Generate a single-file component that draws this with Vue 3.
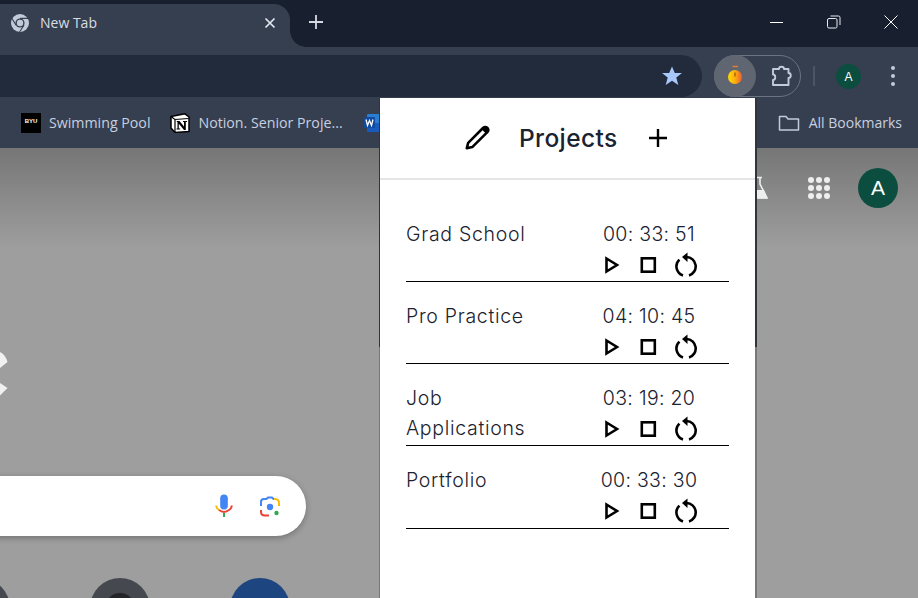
<script setup>
const projects = [
  { name: 'Grad School', time: '00: 33: 51' },
  { name: 'Pro Practice', time: '04: 10: 45' },
  { name: 'Job Applications', time: '03: 19: 20' },
  { name: 'Portfolio', time: '00: 33: 30' },
];
</script>

<template>
  <div class="window">
    <div class="tabstrip">
      <div class="tab">
        <svg class="chrome-icon" width="20" height="20" viewBox="0 0 20 20">
          <circle cx="10" cy="10" r="9" fill="#c3cbdb" />
          <circle cx="10" cy="10" r="4.6" fill="#363f4f" />
          <circle cx="10" cy="10" r="3.2" fill="#c3cbdb" />
          <path d="M10 5.4H18M6 12.3 2 5.5M14 12.3 9.5 19" stroke="#363f4f" stroke-width="1.1" fill="none" />
        </svg>
        <span class="tab-title">New Tab</span>
        <svg class="tab-close" width="12" height="12" viewBox="0 0 12 12">
          <path d="M1.5 1.5 10.5 10.5M10.5 1.5 1.5 10.5" stroke="#e3e7ef" stroke-width="1.7" />
        </svg>
      </div>
      <svg class="new-tab" width="14" height="14" viewBox="0 0 14 14">
        <path d="M7 0V14M0 7H14" stroke="#d5dae4" stroke-width="1.8" />
      </svg>
      <div class="win-controls">
        <svg width="14" height="14" viewBox="0 0 14 14"><path d="M0 7.5H13" stroke="#fff" stroke-width="1" /></svg>
        <svg width="14" height="14" viewBox="0 0 14 14" fill="none" stroke="#e8ebf0" stroke-width="1">
          <rect x="0.5" y="3.5" width="9.5" height="9.5" rx="1.5" />
          <path d="M3.5 1H11.5Q13 1 13 2.5V10" />
        </svg>
        <svg width="14" height="14" viewBox="0 0 14 14"><path d="M0.5 0.5 13.5 13.5M13.5 0.5 0.5 13.5" stroke="#fff" stroke-width="1" /></svg>
      </div>
    </div>

    <div class="toolbar">
      <div class="omnibox">
        <svg width="22" height="22" viewBox="0 0 22 22">
          <path d="M11 1.5 13.8 8H21L15.3 12.6 17.3 20 11 15.8 4.7 20 6.7 12.6 1 8H8.2Z" fill="#a8c7fa" />
        </svg>
      </div>
      <div class="ext-pill">
        <div class="ext-active">
          <svg width="20" height="22" viewBox="0 0 20 22">
            <defs>
              <linearGradient id="timerFill" x1="0" y1="0" x2="1" y2="0">
                <stop offset="0" stop-color="#ffd800" />
                <stop offset="0.5" stop-color="#fdb010" />
                <stop offset="1" stop-color="#ee5a30" />
              </linearGradient>
            </defs>
            <path d="M7.5 1.500H13" stroke="#ef7d22" stroke-width="1.4" />
            <circle cx="10" cy="12" r="7" fill="url(#timerFill)" />
            <path d="M10 7.500V11.500" stroke="#9c4a18" stroke-width="1.200" />
          </svg>
        </div>
        <svg class="puzzle" width="24" height="24" viewBox="0 0 24 24">
          <path d="M3 5H9C9 2 14 2 14 5H18.5V9C21.5 9 21.5 14 18.5 14V21H3V16C6 16 6 10.5 3 10.5Z" fill="none" stroke="#c3cbdb" stroke-width="1.9" stroke-linejoin="round" />
        </svg>
      </div>
      <div class="tool-sep"></div>
      <div class="avatar-small">A</div>
      <div class="kebab"><i></i><i></i><i></i></div>
    </div>

    <div class="bookmarks">
      <div class="bm bm-byu">
        <div class="byu-icon">BYU</div>
        <span>Swimming Pool</span>
      </div>
      <div class="bm bm-notion">
        <svg width="20" height="20" viewBox="0 0 20 20">
          <path d="M1 3.500 15 0.800 19 4V18.500L5 19.500 1 15Z" fill="#fff" stroke="#000" stroke-width="1.500" stroke-linejoin="round" />
          <path d="M1.500 4 5 6.500 18.500 5.500M5 6.500V19" fill="none" stroke="#000" stroke-width="1.200" />
          <path d="M6.800 8H9.500L14 13.500V9H13V8H17V9H15.800V17H14L8.800 10.800V15.500H10.200V16.500H6.500V15.500H7.500V9H6.800Z" fill="#000" />
        </svg>
        <span>Notion. Senior Proje...</span>
      </div>
      <svg class="word-icon" width="16" height="20" viewBox="0 0 16 20">
        <rect x="3" y="1" width="13" height="18" rx="1" fill="#2b7cd3" />
        <rect x="3" y="10" width="13" height="9" fill="#185abd" />
        <rect x="0" y="4" width="11" height="11" rx="1" fill="#124a9e" />
        <path d="M2 6.5 3.5 12.5 5.5 7.5 7.5 12.5 9 6.5" fill="none" stroke="#fff" stroke-width="1.3" />
      </svg>
      <div class="bm bm-all">
        <svg width="22" height="18" viewBox="0 0 22 18">
          <path d="M1.5 2.5H8L10 5H20.5V16H1.5Z" fill="none" stroke="#c3cbdb" stroke-width="1.5" stroke-linejoin="round" />
        </svg>
        <span>All Bookmarks</span>
      </div>
    </div>

    <div class="page">
      <div class="page-top">
        <svg class="flask" width="26" height="26" viewBox="0 0 26 26">
          <path d="M6 2.5H15M8 3V9L1 23H20L13 9V3" fill="none" stroke="#eee" stroke-width="1.6" />
          <path d="M5 15H17L20.5 23.5H1Z" fill="#eee" />
        </svg>
        <div class="apps">
          <i v-for="n in 9" :key="n"></i>
        </div>
        <div class="avatar-big">A</div>
      </div>
      <svg class="logo-part" width="8" height="46" viewBox="0 0 8 46">
        <path d="M0 2C4 4 6.500 8 7.500 12L0 18Z" fill="#f1f1f1" />
        <path d="M0 33 7.500 38 0 45.500Z" fill="#f1f1f1" />
      </svg>
      <div class="search">
        <svg width="18" height="24" viewBox="0 0 18 24">
          <rect x="5.200" y="0.500" width="7.600" height="15" rx="3.800" fill="#4285f4" />
          <path d="M1.200 11.500C1.300 13.500 2.300 15 4 16" fill="none" stroke="#fbbc05" stroke-width="2" />
          <path d="M4 16C7 18.300 11 18.300 14 16 15.700 15 16.700 13.500 16.800 11.500" fill="none" stroke="#ea4335" stroke-width="2" />
          <path d="M9 19V23" stroke="#34a853" stroke-width="2" />
        </svg>
        <svg width="22" height="22" viewBox="0 0 22 22" fill="none" stroke-width="2">
          <path d="M2 11V7Q2 4 5 4H7.500L9 2.500H13L14.500 4H15" stroke="#4285f4" />
          <path d="M15 3.800Q20 4 20 8V11" stroke="#fbbc05" />
          <path d="M2 15V17Q2 20.500 6 20.500H10" stroke="#ea4335" />
          <circle cx="11" cy="12" r="3.200" fill="#4285f4" stroke="none" />
          <circle cx="17.500" cy="18" r="2.200" fill="#34a853" stroke="none" />
        </svg>
      </div>
      <div class="shortcuts">
        <div class="shortcut dark-gray"></div>
        <div class="shortcut dark-gray"><div class="shortcut-inner"></div></div>
        <div class="shortcut blue"></div>
      </div>
    </div>

    <div class="popup">
      <header class="popup-head">
        <svg width="28" height="28" viewBox="0 0 26 26">
          <path d="M3.500 22.500 4.800 17.500 18.800 3.500Q20.800 2 22.800 3.700 24.300 5.600 22.600 7.600L8.600 21.400Z" fill="#fff" stroke="#000" stroke-width="2.400" stroke-linejoin="round" />
          <path d="M17.500 5 21.300 8.800 23 7 23 3.500 19.500 2.500Z" fill="#000" />
        </svg>
        <h1>Projects</h1>
        <svg width="20" height="20" viewBox="0 0 20 20">
          <path d="M10 1V19M1 10H19" stroke="#000" stroke-width="2.400" />
        </svg>
      </header>
      <div class="list">
        <div v-for="p in projects" :key="p.name" class="project">
          <div class="project-name">{{ p.name }}</div>
          <div class="project-side">
            <div class="project-time">{{ p.time }}</div>
            <div class="project-actions">
              <svg width="24" height="24" viewBox="0 0 24 24">
                <path d="M7.500 5.500 18 12 7.500 18.500Z" fill="none" stroke="#000" stroke-width="2.600" />
              </svg>
              <svg width="24" height="24" viewBox="0 0 24 24">
                <rect x="5.800" y="5.300" width="13" height="13.400" fill="none" stroke="#000" stroke-width="2.600" />
              </svg>
              <svg width="24" height="26" viewBox="-1 0 24 26">
                <path d="M12.500 5A9.400 9.400 0 0 1 15 23.400M9 23.400A9.400 9.400 0 0 1 5.400 7.600" fill="none" stroke="#000" stroke-width="2.600" />
                <path d="M13.500 0.500V10L8 5Z" fill="#000" />
              </svg>
            </div>
          </div>
        </div>
      </div>
    </div>
  </div>
</template>

<style scoped>
.window {
  position: relative;
  width: 918px;
  height: 598px;
  overflow: hidden;
  display: flex;
  flex-direction: column;
  background: #9e9e9e;
  font-family: "Open Sans", "Noto Sans", sans-serif;
}

/* tab strip */
.tabstrip {
  height: 47px;
  flex: none;
  display: flex;
  background: #18202f;
}

.tab {
  position: relative;
  width: 290px;
  margin-top: 4px;
  padding: 0 14px 6px 10px;
  box-sizing: border-box;
  display: flex;
  align-items: center;
  gap: 10px;
  background: #363f4f;
  border-radius: 0 16px 0 0;
}

.tab::after {
  content: "";
  position: absolute;
  right: -16px;
  bottom: 0;
  width: 16px;
  height: 16px;
  background: radial-gradient(circle at 100% 0, transparent 15.5px, #363f4f 16px);
}

.tab-title {
  flex: 1;
  font-size: 14px;
  color: #d8dde6;
}

.new-tab {
  margin: 15px 0 0 19px;
}

.win-controls {
  margin-left: auto;
  display: flex;
  gap: 43px;
  padding: 15px 20px 0 0;
}

/* toolbar */
.toolbar {
  height: 50px;
  flex: none;
  display: flex;
  align-items: flex-end;
  background: #363f4f;
}

.omnibox {
  width: 702px;
  height: 42px;
  flex: none;
  padding-right: 19px;
  box-sizing: border-box;
  display: flex;
  align-items: center;
  justify-content: flex-end;
  background: #222b3b;
  border-radius: 0 21px 21px 0;
}

.ext-pill {
  width: 87px;
  height: 42px;
  margin-left: 12px;
  flex: none;
  box-sizing: border-box;
  display: flex;
  align-items: center;
  border: 1px solid #6b7280;
  border-radius: 21px;
}

.ext-active {
  width: 42px;
  height: 42px;
  margin-left: -1px;
  flex: none;
  display: flex;
  align-items: center;
  justify-content: center;
  background: #5f6672;
  border-radius: 50%;
}

.puzzle {
  margin-left: 14px;
}

.tool-sep {
  width: 2px;
  height: 20px;
  margin: 0 21px 11px 12px;
  background: #4b5563;
}

.avatar-small {
  width: 25px;
  height: 25px;
  margin-bottom: 8px;
  display: flex;
  align-items: center;
  justify-content: center;
  font-family: "Liberation Sans", sans-serif;
  font-size: 12px;
  color: #fff;
  background: #0b4d3e;
  border-radius: 50%;
}

.kebab {
  margin: 0 0 11px 30px;
  display: flex;
  flex-direction: column;
  gap: 4px;
}

.kebab i {
  width: 4px;
  height: 4px;
  background: #c3cbdb;
  border-radius: 50%;
}

/* bookmarks */
.bookmarks {
  height: 51px;
  flex: none;
  display: flex;
  align-items: center;
  padding: 0 16px 0 21px;
  background: #363f4f;
  font-size: 14.2px;
  color: #c7d0e0;
}

.bm {
  display: flex;
  align-items: center;
  gap: 8px;
  white-space: nowrap;
}

.bm-notion {
  margin-left: 20px;
}

.word-icon {
  margin-left: 21px;
}

.bm-all {
  margin-left: auto;
  gap: 9px;
  font-size: 14px;
}

.byu-icon {
  width: 20px;
  height: 20px;
  display: flex;
  justify-content: center;
  padding-top: 5px;
  box-sizing: border-box;
  font-family: "Liberation Sans", sans-serif;
  font-size: 6px;
  font-weight: 700;
  color: #fff;
  background: #000;
}

/* new tab page behind */
.page {
  flex: 1;
  display: flex;
  flex-direction: column;
  align-items: flex-start;
  background: linear-gradient(#767676, #9e9e9e 100px);
}

.page-top {
  align-self: stretch;
  height: 40px;
  padding: 20px 20px 0 0;
  display: flex;
  align-items: center;
  justify-content: flex-end;
}

.flask {
  margin-right: 35px;
}

.apps {
  width: 22px;
  margin-right: 28px;
  display: grid;
  grid-template-columns: repeat(3, 6px);
  gap: 2px;
}

.apps i {
  height: 6px;
  background: #eee;
  border-radius: 50%;
}

.avatar-big {
  width: 40px;
  height: 40px;
  display: flex;
  align-items: center;
  justify-content: center;
  font-family: "Liberation Sans", sans-serif;
  font-size: 21px;
  color: #fff;
  background: #0b4d3e;
  border-radius: 50%;
}

.logo-part {
  margin-top: 142px;
}

.search {
  width: 336px;
  height: 60px;
  margin: 80px 0 0 -30px;
  padding-right: 25px;
  box-sizing: border-box;
  display: flex;
  align-items: center;
  justify-content: flex-end;
  gap: 26px;
  background: #fff;
  border-radius: 30px;
  box-shadow: 0 2px 6px rgba(0, 0, 0, 0.28);
}

.shortcuts {
  margin: 42px 0 0 -50px;
  display: flex;
  gap: 80px;
}

.shortcut {
  width: 60px;
  height: 60px;
  flex: none;
  display: flex;
  justify-content: center;
  padding-top: 15px;
  box-sizing: border-box;
  border-radius: 50%;
}

.dark-gray {
  background: #45484f;
}

.blue {
  background: #1d4580;
}

.shortcut-inner {
  width: 30px;
  height: 30px;
  background: #232427;
  border-radius: 50%;
}

/* extension popup */
.popup {
  position: absolute;
  left: 379px;
  top: 98px;
  width: 378px;
  bottom: 0;
  box-sizing: border-box;
  background: #fff;
  border-style: solid;
  border-width: 0 2px 0 1px;
  border-image: linear-gradient(#30343b 249px, #777 249px) 1;
  color: #1b2230;
  font-family: Inter, "Open Sans", sans-serif;
}

.popup-head {
  height: 80px;
  padding-right: 4px;
  display: flex;
  align-items: center;
  justify-content: center;
  border-bottom: 2px solid #e5e5e5;
}

.popup-head h1 {
  margin: 0 30px 0 27.5px;
  font-size: 24.5px;
  font-weight: 500;
  letter-spacing: 0.4px;
}

.list {
  padding: 20px 26px 0 26px;
}

.project {
  height: 82px;
  padding-top: 18.500px;
  box-sizing: border-box;
  display: flex;
  border-bottom: 1px solid #000;
}

.project:last-child {
  height: 83px;
}

.project-name {
  width: 140px;
  font-size: 19.5px;
  font-weight: 350;
  line-height: 30px;
  letter-spacing: 0.7px;
}

.project-side {
  width: 100px;
  margin-left: 53px;
}

.project-time {
  height: 30px;
  font-size: 19.5px;
  font-weight: 350;
  line-height: 30px;
  letter-spacing: 0.3px;
  text-align: center;
  white-space: nowrap;
}

.project-actions {
  height: 30px;
  margin-top: 1.500px;
  display: flex;
  align-items: center;
  gap: 13px;
}
</style>

<style>
html,
body {
  margin: 0;
  background: #9e9e9e;
}
</style>
